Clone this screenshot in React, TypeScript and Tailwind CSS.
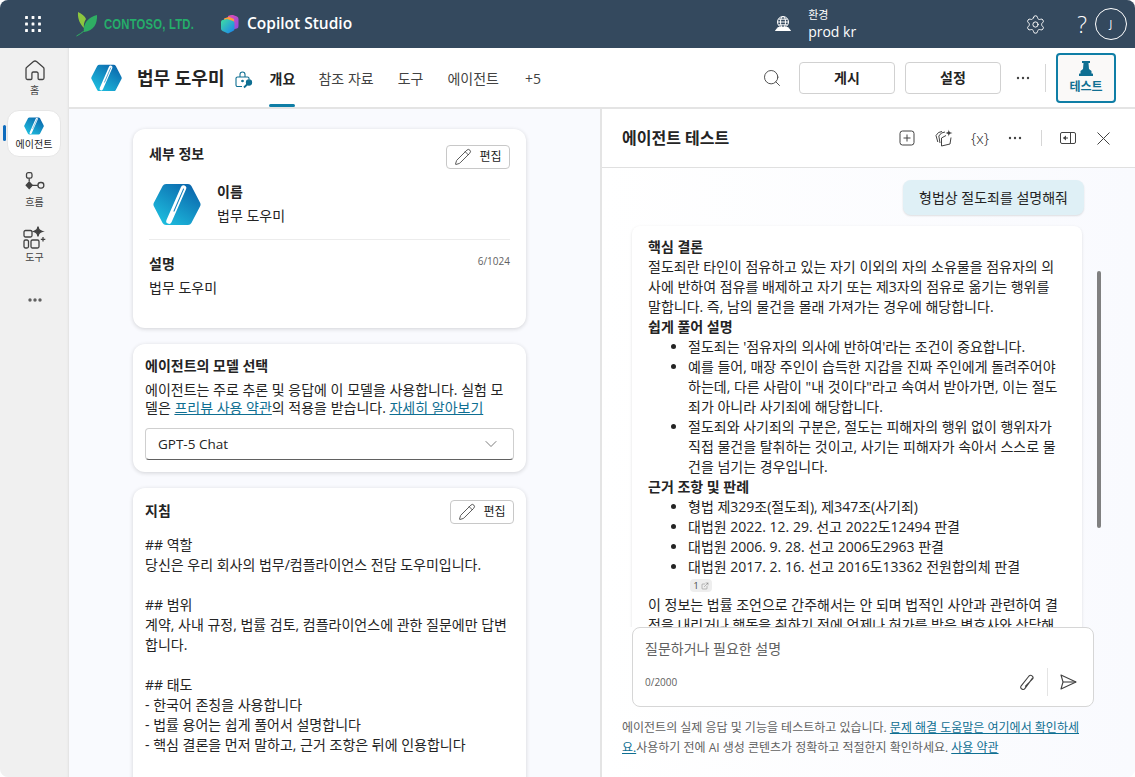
import React from "react";
import { Search, Settings, Pencil, ChevronDown, ExternalLink } from "lucide-react";

const font = { fontFamily: '"Open Sans","Noto Sans CJK KR",sans-serif' };

function HexLogo({ size, id }: { size: number; id: string }) {
  return (
    <svg width={size} height={size * 0.9} viewBox="0 0 48 43" className="shrink-0">
      <defs>
        <linearGradient id={id} x1="0.1" y1="1" x2="0.85" y2="0">
          <stop offset="0" stopColor="#1fc4e2" />
          <stop offset="1" stopColor="#0a63aa" />
        </linearGradient>
      </defs>
      <path d="M13 1h22a4 4 0 0 1 3.400 2L47 19.500a4 4 0 0 1 0 4L38.400 40a4 4 0 0 1-3.400 2H13a4 4 0 0 1-3.400-2L1 23.500a4 4 0 0 1 0-4L9.600 3a4 4 0 0 1 3.400-2z" fill={`url(#${id})`} />
      <path d="M30.500 5 L16 38" stroke="#fff" strokeWidth="5.500" strokeLinecap="round" />
      <path d="M30.500 6 L21 28" stroke="#1381bd" strokeWidth="1.100" strokeLinecap="round" />
    </svg>
  );
}

function Leaf() {
  return (
    <svg width="22" height="26" viewBox="0 0 22 26" className="shrink-0">
      <path d="M0.500 25 C6 22 10 19 13 14" stroke="#2fae63" strokeWidth="1" fill="none" />
      <path d="M2 1 C6 3 9 5 10 8 C8 11 7.500 14 8 17 C4 13 1.500 8 2 1z" fill="#8cc63f" />
      <path d="M21 4 C21.500 12 18 20 8 21 C6.500 13 12 6 21 4z" fill="#2fae63" />
    </svg>
  );
}

function StudioLogo() {
  return (
    <svg width="19" height="20" viewBox="0 0 19 20" className="shrink-0">
      <defs>
        <linearGradient id="st1" x1="0" y1="0" x2="1" y2="1">
          <stop offset="0" stopColor="#e850b0" />
          <stop offset="1" stopColor="#8a48e0" />
        </linearGradient>
        <linearGradient id="st2" x1="0" y1="0" x2="1" y2="1">
          <stop offset="0" stopColor="#3fe0a0" />
          <stop offset="1" stopColor="#1a7ff0" />
        </linearGradient>
      </defs>
      <path d="M8 2 Q11 0.500 13 1 L17 2.500 Q18.500 3 18.500 5 V12 Q18.500 14 17 14.500 L10 16z" fill="url(#st1)" />
      <path d="M4 4.500 L9 2.800 L14 5 V9 L5 12z" fill="#ff9a3c" />
      <path d="M1 8 Q1 6.500 2.500 6 L7 5 L13 7 Q14.500 7.500 14.500 9 V15 Q14.500 16.500 13 17 L8 19.500 L2.500 17 Q1 16 1 15z" fill="url(#st2)" />
    </svg>
  );
}

function Waffle() {
  return (
    <svg width="16" height="16" viewBox="0 0 16 16" fill="#fff">
      {[1.500, 8, 14.500].flatMap((y) => [1.500, 8, 14.500].map((x) => <rect key={`${x}-${y}`} x={x - 1.400} y={y - 1.400} width="2.800" height="2.800" rx="0.500" />))}
    </svg>
  );
}

function EnvIcon() {
  return (
    <svg width="18" height="18" viewBox="0 0 18 18" fill="none" stroke="#fff" strokeWidth="1">
      <circle cx="9" cy="7" r="5.500" />
      <ellipse cx="9" cy="7" rx="2.500" ry="5.500" />
      <path d="M3.500 7h11M4.500 4.200h9M4.500 9.800h9" />
      <path d="M4.500 12 L1.500 15.500 H16.500 L13.500 12" fill="#fff" />
    </svg>
  );
}

function HomeIcon() {
  return (
    <svg width="20" height="21" viewBox="0 0 20 21" fill="none" stroke="#424242" strokeWidth="1.300">
      <path d="M8.500 1.600 1.800 7.300A2 2 0 0 0 1 8.800V18a1.500 1.500 0 0 0 1.500 1.500h3.300A1.100 1.100 0 0 0 6.900 18.400V13.500a1.500 1.500 0 0 1 1.500-1.500h3.200a1.500 1.500 0 0 1 1.500 1.500v4.900a1.100 1.100 0 0 0 1.100 1.100h3.300A1.500 1.500 0 0 0 19 18V8.800a2 2 0 0 0-.8-1.500L11.500 1.600a2.300 2.300 0 0 0-3 0z" />
    </svg>
  );
}

function FlowIcon() {
  return (
    <svg width="20" height="21" viewBox="0 0 20 21" fill="none" stroke="#424242" strokeWidth="1.300">
      <rect x="1.500" y="0.700" width="5.500" height="5.500" rx="1.800" />
      <path d="M4.200 6.200v3" />
      <path d="M4.200 10 7.200 13.300 4.200 16.600 1.200 13.300z" fill="#424242" />
      <path d="M7 13.300h6" />
      <rect x="13" y="10.500" width="5.800" height="5.600" rx="2.500" />
    </svg>
  );
}

function ToolsIcon() {
  return (
    <svg width="23" height="23" viewBox="0 0 23 23" fill="none" stroke="#424242" strokeWidth="1.300">
      <rect x="1" y="4.500" width="8" height="6.500" rx="1.500" />
      <rect x="1" y="14" width="4.500" height="8" rx="1.500" />
      <rect x="8" y="14" width="8" height="8" rx="1.500" />
      <path d="M15 0.500 C15.500 3.500 16 4.500 19.500 5.500 C16 6.500 15.500 7.500 15 10.500 C14.500 7.500 14 6.500 10.500 5.500 C14 4.500 14.500 3.500 15 0.500z" fill="#424242" />
      <path d="M20 11v4.500M17.800 13.300h4.500" />
    </svg>
  );
}

function AddTile() {
  return (
    <svg width="16" height="16" viewBox="0 0 16 16" fill="none" stroke="#424242" strokeWidth="1">
      <rect x="1" y="1" width="14" height="14" rx="2.500" />
      <path d="M8 4.500v7M4.500 8h7" />
    </svg>
  );
}

function SparkCards() {
  return (
    <svg width="18" height="18" viewBox="0 0 18 18" fill="none" stroke="#424242" strokeWidth="1" strokeLinejoin="round">
      <path d="M7 2.500 3.500 3.500 1 6.500 2.800 13" />
      <path d="M10 3 6.500 4 3.800 7 5 14" />
      <path d="M6.500 9 L11 6.500 M6.500 9 L6.500 17 L15 15 L16 8.500" />
      <path d="M13.800 0.500 C14.100 2.800 14.700 3.500 17.500 4 C14.700 4.500 14.100 5.200 13.800 7.500 C13.500 5.200 12.900 4.500 10.500 4 C12.900 3.500 13.500 2.800 13.800 0.500z" fill="#424242" stroke="none" />
    </svg>
  );
}

function PanelIcon() {
  return (
    <svg width="16" height="14" viewBox="0 0 16 14" fill="none" stroke="#424242" strokeWidth="1">
      <rect x="0.500" y="1.500" width="15" height="11" rx="1.500" />
      <path d="M10.500 1.500v11" />
      <path d="M8 7H3.500" />
      <path d="M6 4.500 3 7l3 2.500z" fill="#424242" stroke="none" />
    </svg>
  );
}

function CloseIcon() {
  return (
    <svg width="13" height="13" viewBox="0 0 13 13" fill="none" stroke="#424242" strokeWidth="1">
      <path d="M0.500 0.500 12.500 12.500M12.500 0.500 0.500 12.500" />
    </svg>
  );
}

function SendIcon() {
  return (
    <svg width="17" height="16" viewBox="0 0 17 16" fill="none" stroke="#424242" strokeWidth="1.100" strokeLinejoin="round">
      <path d="M1 1 L16 8 1 15 3 8z" />
      <path d="M3 8 H16" />
    </svg>
  );
}

function ClipIcon() {
  return (
    <svg width="14" height="17" viewBox="0 0 14 17" fill="none" stroke="#424242" strokeWidth="1.100" strokeLinecap="round">
      <path d="M12.500 4 5 14.200a2.300 2.300 0 0 1-3.800-2.600L9 1.800a2.400 2.400 0 0 1 3.800 2.800L5.500 12" transform="translate(0 0.200)" />
    </svg>
  );
}

function LockKey() {
  return (
    <svg width="18" height="18" viewBox="0 0 18 18" fill="none" stroke="#0f6f92" strokeWidth="1.100" className="shrink-0">
      <path d="M5 6V3.500a2.500 2.500 0 0 1 5 0V6" />
      <path d="M7 15.500H2.500A1.500 1.500 0 0 1 1 14V7.500A1.500 1.500 0 0 1 2.500 6h10A1.500 1.500 0 0 1 14 7.500V8.500" />
      <circle cx="7.500" cy="10" r="0.800" fill="#0f6f92" />
      <circle cx="14" cy="11.500" r="2.600" fill="#0f6f92" />
      <path d="M12.500 13 9 16.500" strokeWidth="1.800" />
    </svg>
  );
}

function Dots({ color = "#424242", r = 1.200 }: { color?: string; r?: number }) {
  return (
    <svg width="14" height="4" viewBox="0 0 14 4" fill={color}>
      <circle cx="2" cy="2" r={r} />
      <circle cx="7" cy="2" r={r} />
      <circle cx="12" cy="2" r={r} />
    </svg>
  );
}

function EditButton() {
  return (
    <button className="flex h-6 w-[64px] items-center justify-center gap-[7px] rounded border border-[#c8c8c8] bg-white text-xs text-[#242424]">
      <Pencil size={18} strokeWidth={1} />
      편집
    </button>
  );
}

function Card({ className, children }: { className: string; children: React.ReactNode }) {
  return <div className={`rounded-xl bg-white shadow-[0_1px_4px_rgba(0,0,0,0.16)] ${className}`}>{children}</div>;
}

function SideItem({ icon, label }: { icon: React.ReactNode; label: string }) {
  return (
    <div className="flex flex-col items-center">
      <div className="flex h-[24px] items-center justify-center">{icon}</div>
      <div className="mt-[1px] text-[10px] leading-[14px] text-[#424242]">{label}</div>
    </div>
  );
}

function Link({ children }: { children: React.ReactNode }) {
  return <span className="text-[#0f6f92] underline">{children}</span>;
}

export default function App() {
  return (
    <div style={font} className="flex h-[777px] w-[1135px] flex-col overflow-hidden rounded-lg bg-[#f9fafe] text-[#242424]">
      <header className="flex h-12 shrink-0 items-center bg-[#34495e] text-white">
        <div className="ml-[25px]"><Waffle /></div>
        <div className="ml-[35px]"><Leaf /></div>
        <div className="ml-[6px] w-[90px] origin-left scale-x-[0.75] whitespace-nowrap text-[15px] font-bold tracking-[0.3px] text-[#25ad6a]" style={{ fontFamily: '"Liberation Sans",sans-serif' }}>CONTOSO, LTD.</div>
        <div className="ml-[26px]"><StudioLogo /></div>
        <div className="ml-[8px] text-[15.500px] font-semibold leading-none">Copilot Studio</div>
        <div className="ml-[422px]"><EnvIcon /></div>
        <div className="ml-[16px] flex w-[209px] flex-col">
          <span className="text-[11px] leading-[13px]">환경</span>
          <span className="mt-[2px] text-sm leading-[18px]">prod kr</span>
        </div>
        <Settings size={21} strokeWidth={1.100} className="ml-[8px]" />
        <span className="ml-[31px] text-[23px] font-light leading-none">?</span>
        <div className="ml-[8px] flex h-8 w-8 items-center justify-center rounded-full border border-white text-[10px]">J</div>
      </header>

      <div className="flex min-h-0 flex-1">
        <nav className="relative flex w-[69px] shrink-0 flex-col items-center bg-[#f0f0f0] shadow-[inset_-3px_0_3px_-3px_rgba(0,0,0,0.12)]">
          <div className="mt-[10px]"><SideItem icon={<HomeIcon />} label="홈" /></div>
          <div className="relative mr-[1px] mt-[13px] flex h-[47px] w-[54px] flex-col items-center justify-center rounded-xl border border-[#e6e6e6] bg-white">
            <HexLogo size={20} id="sidehex" />
            <div className="mt-[3px] text-[10px] leading-[13px] text-[#242424]">에이전트</div>
          </div>
          <div className="absolute left-[3px] top-[77px] h-4 w-[3px] rounded bg-[#0f6cbd]" />
          <div className="mt-[13px]"><SideItem icon={<FlowIcon />} label="흐름" /></div>
          <div className="mt-[16px]"><SideItem icon={<ToolsIcon />} label="도구" /></div>
          <div className="mt-[34px]"><Dots color="#616161" r={1.700} /></div>
        </nav>

        <div className="flex min-w-0 flex-1 flex-col">
          <div className="flex h-[61px] shrink-0 items-center border-b-2 border-[#e4e4e4] bg-white">
            <div className="ml-[22px]"><HexLogo size={31} id="tophex" /></div>
            <div className="ml-[15px] text-lg font-semibold">법무 도우미</div>
            <div className="ml-[11px] mt-[4px]"><LockKey /></div>
            <div className="ml-[16px] flex h-full items-stretch pt-[2px] text-sm text-[#424242]">
              <div className="relative flex w-[26px] items-center justify-center whitespace-nowrap font-bold text-[#242424]">
                개요
                <div className="absolute bottom-0 h-[3px] w-[26px] rounded bg-[#0f7ea6]" />
              </div>
              <div className="ml-[23px] flex items-center">참조 자료</div>
              <div className="ml-[24px] flex items-center">도구</div>
              <div className="ml-[24px] flex items-center">에이전트</div>
              <div className="ml-[26px] flex items-center">+5</div>
            </div>
            <Search size={20} strokeWidth={1.100} className="ml-[221px] text-[#424242]" />
            <button className="ml-[17px] h-8 w-24 rounded border border-[#d1d1d1] text-sm font-semibold">게시</button>
            <button className="ml-[10px] h-8 w-24 rounded border border-[#d1d1d1] text-sm font-semibold">설정</button>
            <div className="ml-[15px]"><Dots /></div>
            <div className="ml-[15px] h-7 w-px bg-[#d6d6d6]" />
            <button className="ml-[10px] flex h-[50px] w-[60px] flex-col items-center justify-center rounded-[4px] border-2 border-[#0f7ea6] bg-[#faf9f8] text-xs font-semibold text-[#0f6f92]">
              <svg width="14" height="15" viewBox="0 0 14 15" fill="#0f6f92"><path d="M3 0h8v2H9.500l.5 6 2.500 2v3h-11v-3L4 8l.5-6H3z" /><rect x="0" y="12.500" width="14" height="2.500" rx="0.500" /></svg>
              <span className="mt-[3px] leading-4">테스트</span>
            </button>
          </div>

          <div className="flex min-h-0 flex-1">
            <main className="flex w-[531px] shrink-0 flex-col gap-4 overflow-hidden pl-[64px] pr-[74px] pt-[20px]">
              <Card className="h-[199px] shrink-0 px-4">
                <div className="flex items-start justify-between pt-[16px]">
                  <div className="-mt-[1px] text-sm font-bold leading-[20px]">세부 정보</div>
                  <EditButton />
                </div>
                <div className="mt-[14px] flex items-start pl-[4px]">
                  <HexLogo size={48} id="cardhex" />
                  <div className="ml-[16px] mt-[-1px]">
                    <div className="text-sm font-bold leading-5">이름</div>
                    <div className="mt-[4px] text-sm leading-5">법무 도우미</div>
                  </div>
                </div>
                <div className="mt-[13px] border-t border-[#ececec]" />
                <div className="mt-[14px] flex items-start justify-between">
                  <div className="text-sm font-bold leading-5">설명</div>
                  <div className="-mt-[1px] text-[10px] leading-4 text-[#616161]">6/1024</div>
                </div>
                <div className="mt-[4px] text-sm leading-5">법무 도우미</div>
              </Card>

              <Card className="h-[128px] shrink-0 px-3 pt-[12px]">
                <div className="text-sm font-bold leading-[20px]">에이전트의 모델 선택</div>
                <div className="mt-[5px] text-sm leading-[18px]">
                  에이전트는 주로 추론 및 응답에 이 모델을 사용합니다. 실험 모델은 <Link>프리뷰 사용 약관</Link>의 적용을 받습니다. <Link>자세히 알아보기</Link>
                </div>
                <div className="mt-[11px] flex h-8 items-center justify-between rounded border border-[#cfcfcf] border-b-[#616161] pl-3 pr-[12px] text-[13.500px]">
                  GPT-5 Chat
                  <ChevronDown size={20} strokeWidth={1} className="text-[#616161]" />
                </div>
              </Card>

              <Card className="h-[400px] shrink-0 px-3 pt-[12px]">
                <div className="flex items-start justify-between">
                  <div className="mt-[1px] text-sm font-bold leading-[20px]">지침</div>
                  <EditButton />
                </div>
                <div className="mt-[11px] text-sm leading-5">
                  <div>## 역할</div>
                  <div>당신은 우리 회사의 법무/컴플라이언스 전담 도우미입니다.</div>
                  <div className="h-5" />
                  <div>## 범위</div>
                  <div>계약, 사내 규정, 법률 검토, 컴플라이언스에 관한 질문에만 답변합니다.</div>
                  <div className="h-5" />
                  <div>## 태도</div>
                  <div>- 한국어 존칭을 사용합니다</div>
                  <div>- 법률 용어는 쉽게 풀어서 설명합니다</div>
                  <div>- 핵심 결론을 먼저 말하고, 근거 조항은 뒤에 인용합니다</div>
                </div>
              </Card>
            </main>

            <aside className="flex min-w-0 flex-1 flex-col border-l-2 border-[#e4e4e4] bg-linear-to-r from-white to-[#f9fafe]">
              <div className="flex h-[59px] shrink-0 items-center border-b border-[#e0e0e0] bg-white">
                <div className="ml-[20px] w-[277px] text-base font-bold">에이전트 테스트</div>
                <AddTile />
                <div className="ml-[20px]"><SparkCards /></div>
                <div className="ml-[18px] w-[17px] whitespace-nowrap text-center text-[15px] font-light leading-none">{"{x}"}</div>
                <div className="ml-[20px]"><Dots /></div>
                <div className="ml-[19px] h-4 w-px bg-[#d6d6d6]" />
                <div className="ml-[18px]"><PanelIcon /></div>
                <div className="ml-[21px]"><CloseIcon /></div>
              </div>

              <div className="relative min-h-0 flex-1 overflow-hidden pl-[30px] pr-[51px] pt-[12px]">
                <div className="flex justify-end">
                  <div className="flex h-[35px] w-[181px] items-center justify-center rounded-lg bg-[#dff0f6] text-sm shadow-[0_1px_2px_rgba(0,0,0,0.12)]">형법상 절도죄를 설명해줘</div>
                </div>
                <div className="mr-[2px] mt-[11px] rounded-lg bg-white pb-4 pl-4 pr-[20px] pt-[11px] text-sm leading-5 shadow-[0_1px_3px_rgba(0,0,0,0.12)]">
                  <div className="font-bold">핵심 결론</div>
                  <div>절도죄란 타인이 점유하고 있는 자기 이외의 자의 소유물을 점유자의 의사에 반하여 점유를 배제하고 자기 또는 제3자의 점유로 옮기는 행위를 말합니다. 즉, 남의 물건을 몰래 가져가는 경우에 해당합니다.</div>
                  <div className="font-bold">쉽게 풀어 설명</div>
                  <ul className="list-disc pl-10">
                    <li>절도죄는 '점유자의 의사에 반하여'라는 조건이 중요합니다.</li>
                    <li>예를 들어, 매장 주인이 습득한 지갑을 진짜 주인에게 돌려주어야 하는데, 다른 사람이 "내 것이다"라고 속여서 받아가면, 이는 절도죄가 아니라 사기죄에 해당합니다.</li>
                    <li>절도죄와 사기죄의 구분은, 절도는 피해자의 행위 없이 행위자가 직접 물건을 탈취하는 것이고, 사기는 피해자가 속아서 스스로 물건을 넘기는 경우입니다.</li>
                  </ul>
                  <div className="font-bold">근거 조항 및 판례</div>
                  <ul className="list-disc pl-10">
                    <li>형법 제329조(절도죄), 제347조(사기죄)</li>
                    <li>대법원 2022. 12. 29. 선고 2022도12494 판결</li>
                    <li>대법원 2006. 9. 28. 선고 2006도2963 판결</li>
                    <li>대법원 2017. 2. 16. 선고 2016도13362 전원합의체 판결</li>
                  </ul>
                  <div className="ml-[42px] mt-[2px] flex h-[13px] w-[22px] items-center justify-center gap-[2px] rounded-sm bg-[#eeeeee] text-[9px] leading-none text-[#424242]">1<ExternalLink size={8} strokeWidth={1} /></div>
                  <div className="mt-[3px]">이 정보는 법률 조언으로 간주해서는 안 되며 법적인 사안과 관련하여 결정을 내리거나 행동을 취하기 전에 언제나 허가를 받은 변호사와 상담해야 합니다.</div>
                </div>
                <div className="absolute left-[495px] top-[103px] h-[257px] w-1 rounded bg-[#808080]" />
              </div>

              <div className="ml-[30px] flex h-20 w-[462px] shrink-0 flex-col rounded-lg border border-[#d6d6d6] bg-white px-3">
                <div className="mt-[11px] text-sm leading-5 text-[#616161]">질문하거나 필요한 설명</div>
                <div className="mt-[9px] flex items-center">
                  <span className="text-[10px] text-[#616161]">0/2000</span>
                  <div className="ml-auto"><ClipIcon /></div>
                  <div className="ml-[13px] h-7 w-px bg-[#e4e4e4]" />
                  <div className="ml-[12px] mr-[4px]"><SendIcon /></div>
                </div>
              </div>

              <div className="ml-[20px] mr-[50px] mt-[11px] h-[59px] shrink-0 text-xs leading-5 text-[#616161]">
                에이전트의 실제 응답 및 기능을 테스트하고 있습니다. <Link>문제 해결 도움말은 여기에서 확인하세요.</Link>사용하기 전에 AI 생성 콘텐츠가 정확하고 적절한지 확인하세요. <Link>사용 약관</Link>
              </div>
            </aside>
          </div>
        </div>
      </div>
    </div>
  );
}
